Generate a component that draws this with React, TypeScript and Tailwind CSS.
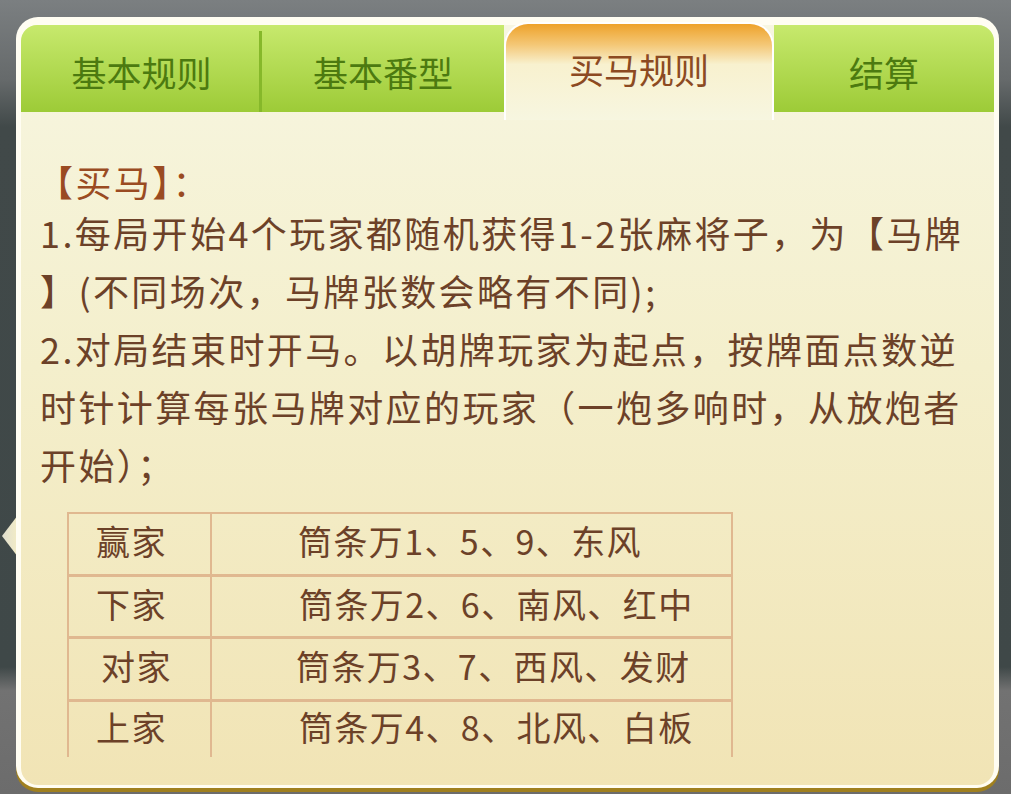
const font = { fontFamily: '"Noto Sans CJK SC", "Noto Sans", sans-serif' };

const tabs = [
  { label: "基本规则", w: "w-[241px]", active: false, divider: true, cls: "rounded-tl-[16px]" },
  { label: "基本番型", w: "w-[242px]", active: false, divider: false, cls: "" },
  { label: "买马规则", w: "w-[270px]", active: true, divider: false, cls: "" },
  { label: "结算", w: "w-[220px]", active: false, divider: false, cls: "rounded-tr-[16px]" },
];

const lines = [
  "1.每局开始4个玩家都随机获得1-2张麻将子，为【马牌",
  "】(不同场次，马牌张数会略有不同);",
  "2.对局结束时开马。以胡牌玩家为起点，按牌面点数逆",
  "时针计算每张马牌对应的玩家（一炮多响时，从放炮者",
  "开始）；",
];

const rows = [
  { who: "赢家", tiles: "筒条万1、5、9、东风", pl: "pl-[27px]", tpl: "pl-[86px]", h: "h-[62px]" },
  { who: "下家", tiles: "筒条万2、6、南风、红中", pl: "pl-[27px]", tpl: "pl-[87px]", h: "h-[62px]" },
  { who: "对家", tiles: "筒条万3、7、西风、发财", pl: "pl-[32px]", tpl: "pl-[84px]", h: "h-[63px]" },
  { who: "上家", tiles: "筒条万4、8、北风、白板", pl: "pl-[27px]", tpl: "pl-[87px]", h: "h-[58px]" },
];

function Tab({ t }: { t: (typeof tabs)[number] }) {
  if (t.active) {
    return (
      <div
        className={`${t.w} relative z-10 -mt-[3px] h-[98px] shrink-0 rounded-t-[24px] border-2 border-b-0 border-white bg-[linear-gradient(to_bottom,#eea22a_0%,#f4c878_22%,#f8f1cf_42%,#f7f6e0_100%)] flex items-center justify-center pb-[8px]`}
      >
        <span className="text-[35px] leading-none text-[#8c4a22]">{t.label}</span>
      </div>
    );
  }
  return (
    <div
      className={`${t.w} ${t.cls} relative h-[87px] shrink-0 bg-[linear-gradient(to_bottom,#c7e96d,#9dcb37)] flex items-center justify-center pt-[5px]`}
    >
      <span className="text-[35px] leading-none text-[#4c7a10]">{t.label}</span>
      {t.divider && (
        <div className="absolute right-[-3px] top-[6px] bottom-0 flex">
          <div className="w-[3px] bg-[#86b82a]" />
          <div className="w-[3px] bg-[#d4f08a]" />
        </div>
      )}
    </div>
  );
}

export default function App() {
  return (
    <div
      style={font}
      className="relative w-[1011px] h-[794px] overflow-hidden bg-[linear-gradient(to_bottom,#7b7f81_0%,#666a6b_10%,#414949_16%,#3f4848_84%,#727272_87%,#6c6c6c_100%)] pt-[17px] pl-[16px] pr-[12px]"
    >
      <svg className="absolute left-0 top-[515px]" width="18" height="42" viewBox="0 0 18 42">
        <defs>
          <linearGradient id="arr" x1="0" x2="1" y1="0" y2="0">
            <stop offset="0" stopColor="#fbf8e6" stopOpacity="0.85" />
            <stop offset="1" stopColor="#f3ecc4" />
          </linearGradient>
        </defs>
        <path d="M18 0 L2 21 L18 42 Z" fill="url(#arr)" />
      </svg>
      <div className="relative h-[771px] rounded-[22px] bg-[#fffdf2] pt-[8px] px-[5px] pb-[3px] shadow-[0_4px_0_#a0801f]">
        <div className="h-full flex flex-col rounded-[17px] bg-[linear-gradient(to_bottom,#f7f6e1_0%,#f4efcc_45%,#f1e4b5_100%)]">
          <div className="flex h-[87px] shrink-0">
            {tabs.map((t) => (
              <Tab key={t.label} t={t} />
            ))}
          </div>
          <div className="pt-[47px] pl-[19px] text-[#6c4128] text-[36px] tracking-[2.4px]">
            <div className="h-[44px] leading-[44px] whitespace-nowrap text-[#9a4b22] -ml-[3px]">【买马】：</div>
            {lines.map((l) => (
              <div key={l} className="h-[58px] leading-[58px] whitespace-nowrap">
                {l}
              </div>
            ))}
            <div className="mt-[19px] ml-[27px] w-[666px] tracking-[1.4px] text-[34px]">
              {rows.map((r, i) => (
                <div
                  key={r.who}
                  className={`${r.h} flex border-x-2 border-[#e0b890] ${i === 0 ? "border-t-2" : "border-t-[3px]"}`}
                >
                  <div className={`w-[143px] shrink-0 border-r-2 border-[#e0b890] flex items-center pb-[7px] ${r.pl}`}>
                    {r.who}
                  </div>
                  <div className={`flex-1 flex items-center whitespace-nowrap pb-[7px] ${r.tpl}`}>{r.tiles}</div>
                </div>
              ))}
            </div>
          </div>
        </div>
      </div>
    </div>
  );
}
